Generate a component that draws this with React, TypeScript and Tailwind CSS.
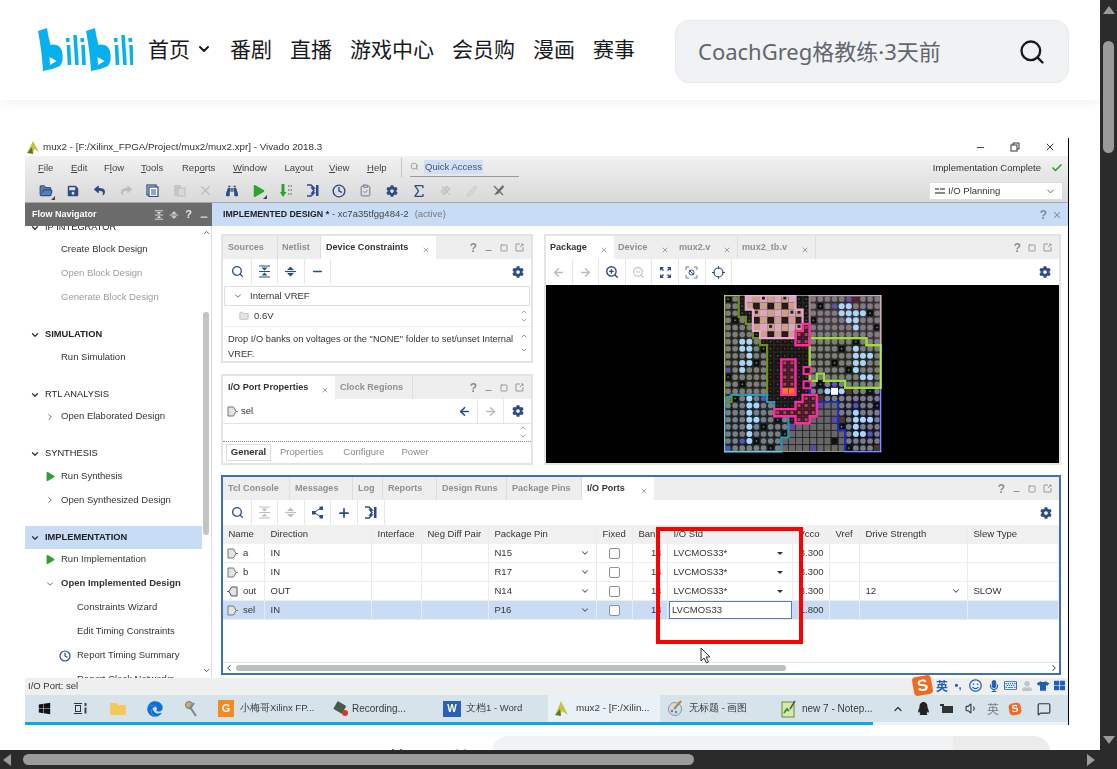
import React from "react";
import { Search, ChevronDown, ChevronRight, ChevronUp, ChevronLeft, Sigma, Minus, X, Square, Plus, Check, Folder, FolderOpen, ArrowLeft, ArrowRight, ZoomIn, ZoomOut, Clock, ClipboardCheck, MessageSquare, Volume1 } from "lucide-react";
import { FaWindows, FaEdge, FaCog, FaPlay, FaSave, FaBinoculars, FaTshirt, FaMicrophone, FaRegKeyboard, FaRegSmile, FaQq, FaUserAlt, FaThLarge, FaFolder, FaReply, FaShare } from "react-icons/fa";

const BLUE = "#2b4c86";
const DIS = "#bdbdbd";

const Logo = () => {
  const part = (
    <g>
      <path d="M0 3 L9 0 Q10 8 12.5 17 Q21 15 24 23 Q26 33 22 38 Q14 42 5 43 Q4 24 0 3Z" fill="#09b0ee" />
      <path d="M11.5 29 L12 37 L18.5 33Z" fill="#fff" />
      <g stroke="#09b0ee" strokeWidth="3.6" fill="none">
        <path d="M29.5 10 L30 14" />
        <path d="M30.5 17 L31.5 37" />
        <path d="M37 7 L39 37" />
        <path d="M44 10 L44.5 14" />
        <path d="M45 17 L46 37" />
      </g>
    </g>
  );
  return (
    <svg width="95" height="44" viewBox="0 0 95 44">
      {part}
      <g transform="translate(48 0)">{part}</g>
    </svg>
  );
};

const CollapseIcon = ({ c = BLUE, s = 13 }: { c?: string; s?: number }) => (
  <svg width={s} height={s} viewBox="0 0 13 13"><path d="M1 1h11M1 12h11M1 6.5h11" stroke={c} strokeWidth="1.2" /><path d="M3.5 2.5h6L6.5 5.5zM3.5 10.500h6L6.500 7.500z" fill={c} /></svg>
);
const ExpandIcon = ({ c = BLUE, s = 13 }: { c?: string; s?: number }) => (
  <svg width={s} height={s} viewBox="0 0 13 13"><path d="M1 6.500h11" stroke={c} strokeWidth="1.2" /><path d="M3 5L6.500 1.500 10 5zM3 8L6.500 11.500 10 8z" fill={c} /></svg>
);
const PortIn = ({ c = "#777" }: { c?: string }) => (
  <svg width="11" height="11" viewBox="0 0 11 11"><path d="M1 1h5.500l2.500 4.500L6.500 10H1z" fill="#e4e4e4" stroke={c} /><path d="M9 5.500h2" stroke={c} /></svg>
);
const PortOut = () => (
  <svg width="11" height="11" viewBox="0 0 11 11"><path d="M10 1H4.500L2 5.500 4.500 10H10z" fill="#e4e4e4" stroke="#555" /><path d="M0 5.500h2" stroke="#555" /></svg>
);
const Gear = () => <FaCog size={12} color={BLUE} />;

const Cell26 = ({ children, w = "w-[26.6px]", sep = false }: any) => (
  <div className={`${w} h-full flex items-center justify-center shrink-0 ${sep ? "border-r border-[#e6e6e6]" : ""}`}>{children}</div>
);

const Corner = () => <div className="absolute right-[-2px] bottom-[-2px] w-0 h-0 border-l-[4px] border-l-transparent border-b-[4px] border-b-[#444]" />;

const MainBar = () => {
  const items: any[] = [
    <div className="relative"><FolderOpen size={14} color={BLUE} fill="#5a7fb5" /><Corner /></div>,
    <FaSave size={12} color={BLUE} />,
    <FaReply size={11} color={BLUE} />,
    <FaShare size={11} color={DIS} />,
    <svg width="13" height="13" viewBox="0 0 13 13"><rect x="1" y="1" width="9" height="10" fill="none" stroke={BLUE} strokeWidth="1.200" /><rect x="3" y="3" width="9" height="9.500" fill="#fff" stroke={BLUE} strokeWidth="1.200" /><path d="M5 6h5M5 8h5M5 10h5" stroke={BLUE} /></svg>,
    <svg width="13" height="13" viewBox="0 0 13 13"><rect x="1" y="1" width="7" height="11" fill="#c6c6c6" /><rect x="5" y="4" width="7" height="8" fill="#d8d8d8" stroke="#bdbdbd" /></svg>,
    <X size={15} color={DIS} strokeWidth={2} />,
    <FaBinoculars size={12} color={BLUE} />,
    <div className="relative"><FaPlay size={12} color="#2fa12f" /><Corner /></div>,
    <svg width="12" height="14" viewBox="0 0 12 14"><path d="M1.500 0h3v8h2l-3.500 5L0 8h1.500z" fill="#2fa12f" /><path d="M8 1h1.500v2H8zM10.500 1H12v2h-1.500zM8 5h1.500v2H8zM10.500 5H12v2h-1.500zM8 9h1.500v2H8zM10.500 9H12v2h-1.500z" fill="#9a9a9a" /></svg>,
    <svg width="13" height="13" viewBox="0 0 13 13"><path d="M1 1h4l3 3h-2l2 2.500L6 9h2l-3 3H1" fill="none" stroke={BLUE} strokeWidth="1.600" /><path d="M10 1h2.500v11H10z" fill={BLUE} /></svg>,
    <Clock size={14} color={BLUE} strokeWidth={2.4} />,
    <ClipboardCheck size={13} color="#5a6a80" strokeWidth={1.6} />,
    <Gear />,
    <Sigma size={16} color={BLUE} strokeWidth={2} />,
    <svg width="13" height="13" viewBox="0 0 13 13"><path d="M3 2l8 9M2 7l6-5 3 3-6 6z" fill="#cfcfcf" stroke={DIS} /></svg>,
    <svg width="13" height="13" viewBox="0 0 13 13"><path d="M2 11L10 2l2 2-8 8z" fill="none" stroke="#cfcfcf" strokeWidth="1.500" /></svg>,
    <svg width="13" height="13" viewBox="0 0 13 13"><path d="M2 2l9 9" stroke="#777" strokeWidth="1.500" /><path d="M11 1L6 6 2 11l4-1 6-7z" fill="#6a6a6a" /></svg>,
  ];
  return (
    <div className="h-[23px] flex items-center pl-[8px] text-[0px]">
      {items.map((it, i) => (
        <Cell26 key={i}>{it}</Cell26>
      ))}
    </div>
  );
};

const menu: [string, string, string, string][] = [
  ["", "F", "ile", "w-[33px]"],
  ["", "E", "dit", "w-[33px]"],
  ["F", "l", "ow", "w-[37px]"],
  ["", "T", "ools", "w-[41px]"],
  ["Rep", "o", "rts", "w-[51px]"],
  ["", "W", "indow", "w-[51.500px]"],
  ["La", "y", "out", "w-[44.500px]"],
  ["", "V", "iew", "w-[38px]"],
  ["", "H", "elp", "w-[32px]"],
];

type Row = { t: string; k: "sec" | "item" | "sub"; color?: string; chev?: "r" | "d"; play?: boolean; bold?: boolean; hi?: boolean; clock?: boolean; boldSec?: boolean };
const rows: Row[] = [
  { t: "IP INTEGRATOR", k: "sec" },
  { t: "Create Block Design", k: "item" },
  { t: "Open Block Design", k: "item", color: "#9c9c9c" },
  { t: "Generate Block Design", k: "item", color: "#9c9c9c" },
  { t: "SIMULATION", k: "sec", boldSec: true },
  { t: "Run Simulation", k: "item" },
  { t: "RTL ANALYSIS", k: "sec" },
  { t: "Open Elaborated Design", k: "item", chev: "r" },
  { t: "SYNTHESIS", k: "sec" },
  { t: "Run Synthesis", k: "item", play: true },
  { t: "Open Synthesized Design", k: "item", chev: "r" },
  { t: "IMPLEMENTATION", k: "sec", hi: true, boldSec: true },
  { t: "Run Implementation", k: "item", play: true },
  { t: "Open Implemented Design", k: "item", chev: "d", bold: true },
  { t: "Constraints Wizard", k: "sub" },
  { t: "Edit Timing Constraints", k: "sub" },
  { t: "Report Timing Summary", k: "sub", clock: true },
  { t: "Report Clock Networks", k: "sub" },
];

const Sidebar = () => (
  <div className="w-[187px] shrink-0 flex flex-col">
    <div className="h-[23px] bg-[#6b6b6b] flex items-center pl-[7px] pr-[1px] text-white text-[9px] font-bold">
      <span className="flex-1">Flow Navigator</span>
      <div className="flex items-center text-[#e6e6e6]">
        <div className="w-[15px] flex justify-center"><CollapseIcon c="#ddd" s={10} /></div>
        <div className="w-[15px] flex justify-center"><ExpandIcon c="#ddd" s={10} /></div>
        <div className="w-[15px] flex justify-center text-[11px] leading-none">?</div>
        <div className="w-[15px] flex justify-center"><Minus size={10} color="#ddd" strokeWidth={3} className="mt-[5px]" /></div>
      </div>
    </div>
    <div className="flex-1 flex overflow-hidden bg-white">
      <div className="w-[177px] shrink-0 overflow-hidden">
        <div className="mt-[-8.500px]">
          {rows.map((r, i) => {
            if (r.k === "sec")
              return (
                <div key={i} className={`flex items-center pl-[5px] text-[9.300px] text-[#222] ${r.hi ? "h-[23px] mt-[14px] mb-[-1.500px] bg-[#c9dcf6]" : `h-[20px] ${i ? "mt-[15.500px]" : ""}`} ${r.boldSec ? "font-bold" : ""}`}>
                  <ChevronDown size={10} color="#333" strokeWidth={3} />
                  <span className="ml-[5px]">{r.t}</span>
                </div>
              );
            return (
              <div key={i} className={`h-[24px] flex items-center text-[9.500px] ${r.k === "sub" ? "pl-[34px]" : "pl-[20px]"} ${r.bold ? "font-bold" : ""}`} style={{ color: r.color || "#333" }}>
                <div className={`${r.k === "sub" ? "w-[18px]" : "w-[16px]"} shrink-0 flex items-center`}>
                  {r.play && <FaPlay size={9} color="#2fa12f" className="ml-[1px]" />}
                  {r.chev === "r" && <ChevronRight size={10} color="#555" />}
                  {r.chev === "d" && <ChevronDown size={10} color="#555" />}
                  {r.clock && <Clock size={12} color={BLUE} strokeWidth={2.400} />}
                </div>
                <span className="whitespace-nowrap">{r.t}</span>
              </div>
            );
          })}
        </div>
      </div>
      <div className="w-[10px] flex flex-col items-center shrink-0 border-r border-[#dcdcdc] pr-[1px]">
        <ChevronUp size={9} color="#555" strokeWidth={2.500} className="mt-[2px]" />
        <div className="w-[6px] h-[223px] mt-[75px] rounded-[3px] bg-[#c4c4c4]" />
        <div className="flex-1" />
        <ChevronDown size={9} color="#555" strokeWidth={2.500} className="mb-[3px]" />
      </div>
    </div>
  </div>
);

const WinCtl = ({ min = true, gap = "gap-[7px]" }: any) => (
  <div className={`flex items-center ${gap} text-[#8a8a8a] ml-auto pr-[7px]`}>
    <span className="text-[12px] font-bold leading-none">?</span>
    {min && <Minus size={9} color="#8a8a8a" strokeWidth={2.500} className="mt-[5px]" />}
    <Square size={8} color="#777" strokeWidth={2} />
    <svg width="9" height="9" viewBox="0 0 9 9"><path d="M5 1H1v7h7V4M5 4l3-3M6 1h2v2" fill="none" stroke="#999" /></svg>
  </div>
);

const Tab = ({ t, w, active, close, pad = "pl-[4px]", sep = true }: any) => (
  <div className={`relative h-full flex items-center shrink-0 text-[9.100px] font-bold ${pad} ${active ? "bg-white text-[#333]" : "text-[#8f8f8f]"} ${sep && !active ? "border-r border-[#dddddd]" : ""}`} style={{ width: w }}>
    <span className="whitespace-nowrap">{t}</span>
    {close && <X size={8} color="#777" className="absolute right-[6px] top-[10px]" />}
  </div>
);

const Box = ({ className = "", children }: any) => <div className={`border-2 border-[#e4e4e4] bg-white flex flex-col overflow-hidden ${className}`}>{children}</div>;

const DevicePanel = () => (
  <Box className="h-[129px]">
    <div className="h-[23px] bg-[#eeeeee] flex items-center shrink-0">
      <Tab t="Sources" w={55} pad="pl-[5px]" />
      <Tab t="Netlist" w={43} />
      <Tab t="Device Constraints" w={115} active close pad="pl-[5px]" />
      <WinCtl />
    </div>
    <div className="h-[27px] shrink-0 flex items-center pl-[2px] pb-[2px]">
      <Cell26 sep><Search size={13} color={BLUE} strokeWidth={2.400} /></Cell26>
      <Cell26 sep><CollapseIcon /></Cell26>
      <Cell26 sep><ExpandIcon /></Cell26>
      <Cell26 sep><Minus size={13} color={BLUE} strokeWidth={3} /></Cell26>
      <div className="ml-auto pr-[7px]"><Gear /></div>
    </div>
    <div className="h-[20px] shrink-0 mx-[1px] border border-[#dedede] flex items-center pl-[8px] text-[9.500px] text-[#333]">
      <ChevronDown size={10} color="#555" />
      <span className="ml-[7px]">Internal VREF</span>
    </div>
    <div className="h-[21px] shrink-0 flex items-center pl-[16px] pr-[3px] text-[9.500px] text-[#333] border-b border-[#eeeeee]">
      <Folder size={10} color="#b9b9b9" fill="#e4e4e4" />
      <span className="ml-[5px]">0.6V</span>
      <div className="ml-auto flex flex-col"><ChevronUp size={8} color="#777" /><ChevronDown size={8} color="#777" /></div>
    </div>
    <div className="flex-1 flex pl-[5px] pr-[3px] pt-[5px] text-[9.300px] leading-[14.500px] text-[#333]">
      <p className="w-[292px]">Drop I/O banks on voltages or the "NONE" folder to set/unset Internal VREF.</p>
      <div className="ml-auto flex flex-col gap-[6px]"><ChevronUp size={8} color="#555" /><ChevronDown size={8} color="#555" /></div>
    </div>
  </Box>
);

const PropsPanel = () => (
  <Box className="flex-1">
    <div className="h-[23px] bg-[#eeeeee] flex items-center shrink-0">
      <Tab t="I/O Port Properties" w={112} active close pad="pl-[5px]" />
      <Tab t="Clock Regions" w={78} pad="pl-[5px]" />
      <WinCtl />
    </div>
    <div className="h-[25px] shrink-0 flex items-center pl-[4px] border-b border-[#e4e4e4] text-[9.500px] text-[#333]">
      <PortIn />
      <span className="ml-[3px]">sel</span>
      <div className="ml-auto flex items-center h-full">
        <Cell26 sep><ArrowLeft size={13} color={BLUE} strokeWidth={3} /></Cell26>
        <Cell26 sep><ArrowRight size={13} color={DIS} strokeWidth={3} /></Cell26>
        <Cell26><Gear /></Cell26>
      </div>
    </div>
    <div className="flex-1 flex justify-end pr-[4px] border-b border-dotted border-[#888]">
      <div className="flex flex-col"><ChevronUp size={8} color="#777" /><ChevronDown size={8} color="#777" /></div>
    </div>
    <div className="h-[21px] shrink-0 flex items-center text-[9.500px] text-[#8a8a8a] pl-[3px]">
      <div className="h-[17px] w-[45px] border border-[#dddddd] flex items-center justify-center font-bold text-[#333]">General</div>
      <span className="ml-[9px]">Properties</span>
      <span className="ml-[20px]">Configure</span>
      <span className="ml-[17px]">Power</span>
    </div>
  </Box>
);

const poly = {
  olive: "0,0 2,0 2,3 3,3 3,4 4,4 4,6 5,6 5,7 6,7 6,14 1,14 1,15 0,15",
  pale: "3,0 10,0 10,2 11,2 11,5 10,5 10,6 5,6 5,5 4,5 4,2 3,2",
  mauve: "12,0 22,0 22,7 20,7 20,6 12,6",
  lime: "12,6 20,6 20,7 22,7 22,13 17,13 17,12 14,12 14,11 13,11 13,12 12,12",
  blue: "12,12 13,12 13,11 14,11 14,12 17,12 17,13 22,13 22,22 17,22 17,19 16,19 16,15 13,15 13,14 12,14",
  teal: "0,15 1,14 6,14 6,15 7,15 7,17 9,17 9,20 8,20 8,22 0,22",
  gray: "8,22 8,20 9,20 9,18 12,18 12,17 13,17 13,15 16,15 16,19 17,19 17,22",
  hot1: "10,5 11,5 11,4 12,4 12,7 10,7",
  hot2: "8,9 10,9 10,14 8,14",
  hot3: "11,14 13,14 13,17 12,17 12,18 10,18 10,17 7,17 7,16 10,16 10,15 11,15",
};
const parse = (s: string) => s.split(" ").map((p) => p.split(",").map(Number));
const inside = (pts: number[][], x: number, y: number) => {
  let c = false;
  for (let i = 0, j = pts.length - 1; i < pts.length; j = i++) {
    const [xi, yi] = pts[i];
    const [xj, yj] = pts[j];
    if (yi > y !== yj > y && x < ((xj - xi) * (y - yi)) / (yj - yi) + xi) c = !c;
  }
  return c;
};
const region = (c: number, r: number) => {
  for (const k of ["hot1", "hot2", "hot3", "olive", "pale", "mauve", "lime", "blue", "teal", "gray"] as const) {
    if (inside(parse(poly[k]), c + 0.5, r + 0.5)) return k;
  }
  return "core";
};
const lightBlue = new Set(["16,1","17,1","16,2","17,2","18,2","19,2","17,3","18,3","18,4","2,6","3,6","2,7","3,7","3,8","2,9","3,9","2,10","3,14","3,15","4,15","3,16","3,17","4,17","3,18","3,19","3,20","18,7","18,8","19,8","20,8","18,9","19,9","18,10","19,11","20,11","18,16","18,17","19,17","20,17","18,18","18,19","19,19","14,13","16,13"]);
const tint: any = { olive: "#2c2f24", mauve: "#4a3a44", lime: "#33372a", blue: "#1c1c38", teal: "#1e2c38" };

const Pkg = () => {
  const S = 7.100;
  const cells: any[] = [];
  for (let r = 0; r < 22; r++)
    for (let c = 0; c < 22; c++) {
      const reg = region(c, r);
      const x = c * S;
      const y = r * S;
      const key = `${c},${r}`;
      const h = (c * 7 + r * 13 + c * r * 3) % 11;
      const cx = x + S / 2;
      const cy = y + S / 2;
      if (reg === "core") {
        cells.push(<rect key={key} x={x + 0.4} y={y + 0.4} width={S - 0.8} height={S - 0.8} fill="#161212" stroke="#444" strokeWidth="0.4" />);
        cells.push(<path key={key + "p"} d={`M${cx - 1.200} ${cy}h2.400M${cx} ${cy - 1.200}v2.400`} stroke={h % 2 ? "#7a2a2a" : "#3a6a3a"} strokeWidth="0.7" />);
      } else if (reg === "pale") {
        cells.push(<rect key={key} x={x} y={y} width={S} height={S} fill={(c + r) % 2 ? "#d9a8c2" : "#caa08a"} />);
        if (c % 2 === 0 && r % 2 === 1) cells.push(<rect key={key + "k"} x={x + 0.800} y={y + 0.800} width={S - 1.600} height={S - 1.600} fill="#2a1a22" stroke="#1a0a12" />);
        else if (h < 3) cells.push(<rect key={key + "k"} x={x + 2} y={y + 1} width={3} height={3} fill="#222" />);
      } else if (reg === "hot1" || reg === "hot2" || reg === "hot3") {
        const orange = reg === "hot2" && r === 13;
        cells.push(<rect key={key} x={x} y={y} width={S} height={S} fill={orange ? "#ff7a1a" : "#3a1a2a"} stroke="#7a2050" strokeWidth="0.5" />);
        if (!orange) cells.push(<rect key={key + "k"} x={x + 2} y={y + 2} width={3} height={3} fill="#a05030" />);
      } else if (reg === "gray") {
        cells.push(<rect key={key} x={x + 0.300} y={y + 0.300} width={S - 0.600} height={S - 0.600} fill={h === 2 ? "#5f48a8" : h === 0 ? "#111" : "#676767"} stroke="#333" strokeWidth="0.4" />);
      } else {
        cells.push(<rect key={key} x={x} y={y} width={S} height={S} fill={tint[reg]} />);
        if (key === "15,13") cells.push(<rect key={key + "w"} x={x} y={y} width={S} height={S} fill="#fff" />);
        else if (lightBlue.has(key)) cells.push(<circle key={key + "c"} cx={cx} cy={cy} r={3} fill="#a9d6fb" />);
        else if (h === 0) {
          cells.push(<rect key={key + "k"} x={x + 0.500} y={y + 0.500} width={S - 1} height={S - 1} fill="#0d0d0d" />);
          cells.push(<path key={key + "p"} d={`M${cx - 1.200} ${cy}h2.400M${cx} ${cy - 1.200}v2.400`} stroke="#5a8a5a" strokeWidth="0.7" />);
        } else if (h === 5 && (c + r) % 3 === 0) {
          cells.push(<rect key={key + "k"} x={x + 0.500} y={y + 0.500} width={S - 1} height={S - 1} fill={reg === "mauve" ? "#5a1e34" : "#4f3a22"} />);
        } else if (h === 9 && (c * r) % 5 === 0) {
          cells.push(<circle key={key + "c"} cx={cx} cy={cy} r={2.600} fill="#5a56b0" />);
        } else cells.push(<circle key={key + "c"} cx={cx} cy={cy} r={2.800} fill="#7d7d7d" />);
      }
    }
  const outline = (p: string, col: string, w = 2.200) => (
    <polygon key={p} points={parse(p).map(([a, b]) => `${a * S},${b * S}`).join(" ")} fill="none" stroke={col} strokeWidth={w} />
  );
  return (
    <svg width="158" height="158" viewBox="-0.500 -0.500 158 158" className="block">
      {cells}
      {outline(poly.mauve, "#a87d96")}
      {outline(poly.olive, "#6e8f1e")}
      {outline(poly.pale, "#e5a9cc")}
      {outline(poly.teal, "#2a98b4")}
      {outline(poly.blue, "#1b2dbd")}
      {outline(poly.lime, "#99e12e", 2.400)}
      {outline(poly.hot1, "#ff2aa8", 2.400)}
      {outline(poly.hot2, "#ff2aa8", 2.400)}
      {outline(poly.hot3, "#ff2aa8", 2.400)}
      {[[11, 10], [11, 12]].map(([a, b]) => (
        <rect key={a + "-" + b} x={a * S + 1} y={b * S + 0.500} width={S} height={S} fill="#2a1220" stroke="#ff2aa8" strokeWidth="2" />
      ))}
      <rect x="0" y="0" width={22 * S} height={22 * S} fill="none" stroke="#d8d8d8" strokeWidth="0.600" />
    </svg>
  );
};

const PackagePanel = () => (
  <Box className="flex-1 h-full">
    <div className="h-[23px] bg-[#eeeeee] flex items-center shrink-0">
      <Tab t="Package" w={68} active close />
      <Tab t="Device" w={61} close sep={false} />
      <Tab t="mux2.v" w={63} close />
      <Tab t="mux2_tb.v" w={78} close />
      <WinCtl min={false} />
    </div>
    <div className="h-[26px] shrink-0 flex items-center">
      <Cell26 sep><ArrowLeft size={13} color={DIS} strokeWidth={3} /></Cell26>
      <Cell26 sep><ArrowRight size={13} color={DIS} strokeWidth={3} /></Cell26>
      <Cell26 sep><ZoomIn size={14} color={BLUE} strokeWidth={2.400} /></Cell26>
      <Cell26 sep><ZoomOut size={13} color={DIS} /></Cell26>
      <Cell26 sep><svg width="13" height="13" viewBox="0 0 13 13"><path d="M1 1l4 0-1.500 1.500L5 4 4 5 2.500 3.500 1 5zM12 1v4l-1.500-1.500L9 5 8 4l1.500-1.500L8 1zM1 12V8l1.500 1.500L4 8l1 1-1.500 1.500L5 12zM12 12H8l1.500-1.500L8 9l1-1 1.500 1.500L12 8z" fill={BLUE} /></svg></Cell26>
      <Cell26 sep><svg width="13" height="13" viewBox="0 0 13 13"><path d="M1 4V1h3M9 1h3v3M1 9v3h3M12 9v3H9" fill="none" stroke="#777" /><circle cx="6.500" cy="6.500" r="2.500" fill="none" stroke={BLUE} /><path d="M4 4l5 5" stroke={BLUE} /></svg></Cell26>
      <Cell26 sep><svg width="13" height="13" viewBox="0 0 13 13"><circle cx="6.500" cy="6.500" r="4.500" fill="none" stroke={BLUE} strokeWidth="1.200" /><path d="M6.500 0v3M6.500 10v3M0 6.500h3M10 6.500h3" stroke={BLUE} /></svg></Cell26>
      <div className="ml-auto pr-[8px]"><Gear /></div>
    </div>
    <div className="flex-1 bg-black flex items-center justify-center"><Pkg /></div>
  </Box>
);

const colsCls = "grid grid-cols-[42px_107px_50px_67px_108px_36px_35px_125px_37px_30px_108px_1fr]";
const headers = ["Name", "Direction", "Interface", "Neg Diff Pair", "Package Pin", "Fixed", "Bank", "I/O Std", "Vcco", "Vref", "Drive Strength", "Slew Type"];
const data = [
  { n: "a", d: "IN", p: "N15", v: "3.300", std: "LVCMOS33*" },
  { n: "b", d: "IN", p: "R17", v: "3.300", std: "LVCMOS33*" },
  { n: "out", d: "OUT", p: "N14", v: "3.300", std: "LVCMOS33*", ds: "12", sl: "SLOW" },
  { n: "sel", d: "IN", p: "P16", v: "1.800", std: "LVCMOS33", sel: true },
];
const Td = ({ className = "", children }: any) => <div className={`h-full flex items-center px-[5.500px] border-r border-[#ececec] ${className}`}>{children}</div>;

const PortsPanel = () => (
  <div className="h-[200px] border-2 border-[#3f6fb5] bg-white flex flex-col overflow-hidden">
    <div className="h-[23px] bg-[#eeeeee] flex items-center shrink-0">
      <Tab t="Tcl Console" w={67} pad="pl-[5px]" />
      <Tab t="Messages" w={63} pad="pl-[5px]" />
      <Tab t="Log" w={30} pad="pl-[5px]" />
      <Tab t="Reports" w={54} pad="pl-[5px]" />
      <Tab t="Design Runs" w={70} pad="pl-[5px]" />
      <Tab t="Package Pins" w={75} pad="pl-[5px]" />
      <Tab t="I/O Ports" w={72} active close pad="pl-[5px]" />
      <WinCtl />
    </div>
    <div className="h-[25px] shrink-0 flex items-center pl-[2px]">
      <Cell26 sep><Search size={13} color={BLUE} strokeWidth={2.400} /></Cell26>
      <Cell26 sep><CollapseIcon c={DIS} /></Cell26>
      <Cell26 sep><ExpandIcon c={DIS} /></Cell26>
      <Cell26 sep><svg width="13" height="13" viewBox="0 0 13 13"><path d="M3 6.500L10 2M3 6.500L10 11" stroke={BLUE} /><rect x="1" y="5" width="3.500" height="3.500" fill={BLUE} /><rect x="8.500" y="0.500" width="3.500" height="3.500" fill={BLUE} /><rect x="8.500" y="9" width="3.500" height="3.500" fill={BLUE} /></svg></Cell26>
      <Cell26 sep><Plus size={14} color={BLUE} strokeWidth={3} /></Cell26>
      <Cell26 sep><svg width="13" height="13" viewBox="0 0 13 13"><path d="M1 1h4l3 3H6l2 2.500L6 9h2l-3 3H1" fill="none" stroke={BLUE} strokeWidth="1.600" /><path d="M10 1h2.500v11H10z" fill={BLUE} /></svg></Cell26>
      <div className="ml-auto pr-[7px]"><Gear /></div>
    </div>
    <div className={`${colsCls} h-[19px] shrink-0 bg-[#f0f0f0] text-[9.500px] text-[#333]`}>
      {headers.map((h) => (
        <Td key={h} className="whitespace-nowrap overflow-hidden">{h}</Td>
      ))}
    </div>
    {data.map((r) => (
      <div key={r.n} className={`${colsCls} h-[19px] shrink-0 text-[9.500px] text-[#333] border-b border-[#ededed] ${r.sel ? "bg-[#c9dcf6]" : "bg-white"}`}>
        <Td className="pl-[4px] gap-[5px]">{r.n === "out" ? <PortOut /> : <PortIn />}<span>{r.n}</span></Td>
        <Td>{r.d}</Td>
        <Td />
        <Td />
        <Td className="justify-between pr-[6px]"><span>{r.p}</span><ChevronDown size={10} color="#555" strokeWidth={2.500} /></Td>
        <Td className="justify-center"><span className="w-[11px] h-[11px] rounded-[2px] border border-[#8f8f8f] bg-white" /></Td>
        <Td className="justify-end">14</Td>
        {r.sel ? (
          <div className="h-full flex items-center pl-[1px] pr-[1px]">
            <div className="w-full h-[18px] bg-white border border-[#5b7db5] pl-[2px] flex items-center">{r.std}</div>
          </div>
        ) : (
          <Td className="justify-between pr-[9px]"><span>{r.std}</span><span className="w-0 h-0 border-x-[3px] border-x-transparent border-t-[3px] border-t-[#333]" /></Td>
        )}
        <Td className="justify-end">{r.v}</Td>
        <Td />
        <Td className="justify-between pr-[6px]"><span>{r.ds}</span>{r.ds && <ChevronDown size={10} color="#555" strokeWidth={2.500} />}</Td>
        <Td>{r.sl}</Td>
      </div>
    ))}
    <div className="flex-1" />
    <div className="h-[11px] shrink-0 border-t border-[#e4e4e4] flex items-center pl-[1px]">
      <ChevronLeft size={10} color="#555" strokeWidth={2.500} />
      <div className="w-[550px] h-[6px] rounded-[3px] bg-[#bdbdbd] ml-[2px]" />
      <ChevronRight size={10} color="#555" strokeWidth={2.500} className="ml-auto" />
    </div>
  </div>
);

const Sogou = ({ s = 16 }: { s?: number }) => (
  <div className="flex items-center justify-center rounded-[4px] bg-[#f26a22] text-white font-bold rotate-[-10deg] leading-none" style={{ width: s, height: s, fontSize: s * 0.85 }}>S</div>
);

const TrayBox = ({ w, children }: any) => <div className="flex justify-center items-center shrink-0" style={{ width: w }}>{children}</div>;

const Taskbar = () => (
  <div className="relative h-[30px] bg-[#d6e3eb] flex text-[#3a3a3a] text-[9.500px] border-b-[3px] border-[#0ea5e9]">
    <div className="absolute right-0 bottom-[-3px] w-[195px] h-[3px] bg-[#e8f3f9]" />
    <div className="w-[193px] h-full flex items-center shrink-0">
      <div className="w-[37px] flex justify-center pl-[2px]"><FaWindows size={13} color="#111" /></div>
      <div className="w-[37px] flex justify-center">
        <svg width="13" height="13" viewBox="0 0 13 13"><path d="M0 1.500h8M0 11.500h8" stroke="#333" strokeWidth="1.200" /><rect x="1.500" y="3.500" width="5" height="6" fill="none" stroke="#333" /><path d="M10.500 1h2v3h-2zM10.500 5.500h2v6h-2z" fill="#444" /></svg>
      </div>
      <div className="w-[37px] flex justify-center"><FaFolder size={16} color="#f4c95a" /></div>
      <div className="w-[37px] flex justify-center"><FaEdge size={16} color="#0f6fd6" /></div>
      <div className="w-[37px] flex justify-center">
        <svg width="17" height="17" viewBox="0 0 17 17"><circle cx="6" cy="5" r="3.500" fill="#c4b277" stroke="#777" /><path d="M7 7l6 9M11 3l-5 6" stroke="#888" strokeWidth="2.200" /></svg>
      </div>
    </div>
    <div className="w-[115px] flex items-center gap-[6px] shrink-0"><div className="w-[16px] h-[17px] bg-[#f58a1f] text-white text-[11px] font-bold flex items-center justify-center">G</div><span className="whitespace-nowrap">小梅哥Xilinx FP...</span></div>
    <div className="w-[110px] flex items-center gap-[2px] shrink-0"><svg width="17" height="17" viewBox="0 0 17 17"><rect x="2" y="3" width="10" height="9" rx="1" fill="#4a5a4a" transform="rotate(30 7 7)" /><circle cx="12" cy="13" r="3" fill="#d03a2a" /></svg><span className="text-[10px]">Recording...</span></div>
    <div className="w-[105px] flex items-center gap-[5px] shrink-0"><div className="w-[18px] h-[16px] bg-[#2b5fb8] text-white text-[10px] font-bold flex items-center justify-center">W</div><span className="whitespace-nowrap">文档1 - Word</span></div>
    <div className="w-[112px] flex items-center gap-[6px] pl-[6px] bg-[#eaf1f6] shrink-0"><svg width="16" height="17" viewBox="0 0 16 17"><path d="M7 1l7 14-6-4-2 5-4-3z" fill="#c9c23f" /><path d="M1 15l5-6 1 7z" fill="#5a7a2a" /></svg><span className="whitespace-nowrap text-[9.800px]">mux2 - [F:/Xilin...</span></div>
    <div className="w-[113px] flex items-center gap-[5px] pl-[7px] shrink-0"><svg width="17" height="17" viewBox="0 0 17 17"><circle cx="8" cy="9" r="6.500" fill="#cfe0ea" stroke="#7a9ab0" /><path d="M14 1L7 9" stroke="#b8863a" strokeWidth="2" /><circle cx="5" cy="11" r="1.200" fill="#e04a3a" /><circle cx="9" cy="12" r="1.200" fill="#3a8ae0" /></svg><span className="whitespace-nowrap">无标题 - 画图</span></div>
    <div className="w-[113px] flex items-center gap-[5px] pl-[7px] shrink-0"><svg width="17" height="18" viewBox="0 0 17 18"><rect x="2" y="2" width="12" height="15" fill="#d8e8a8" stroke="#6a8a3a" /><path d="M4 13l3-4 2 2" stroke="#2f9a2f" strokeWidth="2" fill="none" /><path d="M15 1l-5 8" stroke="#555" strokeWidth="1.500" /></svg><span className="whitespace-nowrap text-[10px]">new 7 - Notep...</span></div>
    <div className="flex-1 flex items-center">
      <TrayBox w={24}><ChevronUp size={12} color="#333" strokeWidth={2.500} /></TrayBox>
      <TrayBox w={26}><FaQq size={13} color="#222" /></TrayBox>
      <TrayBox w={22}><svg width="14" height="10" viewBox="0 0 14 10"><rect x="2" y="2" width="11" height="7" fill="#333" /><rect y="0" width="4" height="2" fill="#333" /></svg></TrayBox>
      <TrayBox w={26}><Volume1 size={13} color="#333" /></TrayBox>
      <TrayBox w={18}><span className="text-[12px] text-[#777]" style={{ fontFamily: '"Noto Sans CJK SC"' }}>英</span></TrayBox>
      <TrayBox w={26}><Sogou s={12} /></TrayBox>
      <TrayBox w={32}><MessageSquare size={14} color="#333" /></TrayBox>
    </div>
  </div>
);

const SogouBar = () => (
  <div className="absolute left-[887px] top-[537px] w-[155px] h-[21px] flex items-center">
    <TrayBox w={21}><Sogou s={19} /></TrayBox>
    <TrayBox w={18}><span className="text-[12px] font-bold text-[#1f5fb8]" style={{ fontFamily: '"Noto Sans CJK SC"' }}>英</span></TrayBox>
    <TrayBox w={14}><span className="text-[11px] font-bold text-[#1f5fb8]">•,</span></TrayBox>
    <TrayBox w={20}><FaRegSmile size={13} color="#1f5fb8" /></TrayBox>
    <TrayBox w={17}><FaMicrophone size={12} color="#1f5fb8" /></TrayBox>
    <TrayBox w={16}><FaRegKeyboard size={13} color="#1f5fb8" /></TrayBox>
    <TrayBox w={17}><FaUserAlt size={10} color="#bcc4cc" /></TrayBox>
    <TrayBox w={16}><FaTshirt size={12} color="#1f5fb8" /></TrayBox>
    <TrayBox w={16}><FaThLarge size={11} color="#1f5fb8" /></TrayBox>
  </div>
);

const Vivado = () => (
  <div className="relative w-[1044px] h-[587px] bg-white border-r border-black flex flex-col blur-[0.35px] text-[#333]" style={{ fontFamily: '"Liberation Sans", sans-serif' }}>
    <div className="h-[18px] flex items-center pl-[2px] pr-[12px] text-[9.800px] text-[#333] shrink-0">
      <svg width="13" height="13" viewBox="0 0 13 13"><path d="M6 0l6 11-5-3-1 5-5-3z" fill="#c9c23f" /><path d="M0 12l5-6 1 7z" fill="#5a7a2a" /></svg>
      <span className="ml-[3px] whitespace-nowrap">mux2 - [F:/Xilinx_FPGA/Project/mux2/mux2.xpr] - Vivado 2018.3</span>
      <div className="ml-auto flex items-center gap-[24px]">
        <Minus size={11} color="#333" />
        <svg width="10" height="10" viewBox="0 0 10 10"><rect x="1" y="3" width="6" height="6" fill="none" stroke="#333" /><path d="M3 3V1h6v6H7" fill="none" stroke="#333" /></svg>
        <X size={12} color="#333" />
      </div>
    </div>
    <div className="h-[47px] shrink-0 bg-gradient-to-b from-[#f1f1f1] to-[#d9d9d9] border-b border-[#a8a8a8] flex">
      <div className="flex flex-col flex-1">
        <div className="h-[24px] flex items-center pl-[13px] text-[9.500px] text-[#444]">
          {menu.map(([a, u, b, w]) => (
            <span key={a + u + b} className={w}>{a}<u>{u}</u>{b}</span>
          ))}
          <div className="h-[19px] border-l border-[#c4c4c4] ml-[2px] pl-[8px] flex items-center">
            <div className="w-[109px] h-[20px] border-b border-[#9a9a9a] flex items-center mt-[-1px]">
              <Search size={9} color="#8a8a8a" />
              <span className="ml-[5px] bg-[#cfe0f8] px-[1px] text-[#44556a]">Quick Access</span>
            </div>
          </div>
        </div>
        <MainBar />
      </div>
      <div className="flex flex-col items-end w-[140px] pr-[5px]">
        <div className="h-[24px] flex items-center gap-[10px] text-[9.500px] whitespace-nowrap">
          <span>Implementation Complete</span>
          <Check size={12} color="#2fa12f" strokeWidth={3.500} />
        </div>
        <div className="h-[18px] mt-[2px] w-[134px] bg-white border border-[#dddddd] flex items-center pl-[5px] pr-[6px] text-[9.500px] text-[#333]">
          <svg width="10" height="8" viewBox="0 0 10 8"><path d="M0 1h4v2H0zM5 1h5v2H5zM0 5h10v2H0z" fill="#888" /></svg>
          <span className="ml-[3px]">I/O Planning</span>
          <ChevronDown size={11} color="#555" className="ml-auto" />
        </div>
      </div>
    </div>
    <div className="flex-1 flex min-h-0 overflow-hidden">
      <Sidebar />
      <div className="flex-1 flex flex-col min-w-0">
        <div className="h-[23px] shrink-0 bg-[#c9dcf6] flex items-center pl-[11px] pr-[6px] text-[9.500px]">
          <span className="font-bold text-[#222] text-[8.800px] whitespace-nowrap">IMPLEMENTED DESIGN *</span>
          <span className="ml-[3px] text-[#444]">- xc7a35tfgg484-2</span>
          <span className="ml-[6px] text-[#777]">(active)</span>
          <div className="ml-auto flex items-center gap-[5px] text-[#7a8a9a]"><span className="text-[12px] font-bold leading-none">?</span><X size={10} color="#7a8a9a" strokeWidth={2.500} /></div>
        </div>
        <div className="flex-1 pl-[9px] pr-[7px] pt-[8px] flex flex-col gap-[10px]">
          <div className="flex gap-[11px] h-[231px]">
            <div className="w-[312px] flex flex-col gap-[11px] shrink-0">
              <DevicePanel />
              <PropsPanel />
            </div>
            <PackagePanel />
          </div>
          <PortsPanel />
        </div>
      </div>
    </div>
    <div className="h-[17px] shrink-0 bg-[#eef0f0] flex items-center pl-[3px] text-[9.500px] text-[#333]">I/O Port: sel</div>
    <Taskbar />
    <SogouBar />
    <div className="absolute left-[631px] top-[389px] w-[147px] h-[117px] border-[4px] border-[#ff0000]" />
    <svg width="13" height="18" viewBox="0 0 13 18" className="absolute left-[675px] top-[509px]"><path d="M1 1v13l3-3 2.500 5 2-1L6 10h4z" fill="#fff" stroke="#333" /></svg>
  </div>
);

const nav = ["番剧", "直播", "游戏中心", "会员购", "漫画", "赛事"];

export default function App() {
  return (
    <div className="w-[1117px] h-[769px] flex flex-col bg-white overflow-hidden" style={{ fontFamily: '"Noto Sans", "Noto Sans CJK SC", sans-serif' }}>
      <div className="h-[750px] flex">
        <div className="w-[1100px] flex flex-col overflow-hidden">
          <header className="relative z-10 h-[100px] shrink-0 bg-white shadow-[0_2px_12px_rgba(0,0,0,0.07)] flex items-center pl-[38px] pr-[31px]">
            <div className="mt-[-1px]"><Logo /></div>
            <nav className="ml-[15px] mt-[-3px] flex items-center gap-[18px] text-[21px] text-[#18191c] whitespace-nowrap" style={{ fontFamily: '"Noto Sans CJK SC", sans-serif' }}>
              <span className="flex items-center gap-[6px]">首页<ChevronDown size={16} color="#18191c" strokeWidth={3} /></span>
              {nav.map((n) => <span key={n}>{n}</span>)}
            </nav>
            <div className="ml-auto w-[394px] h-[63px] mt-[3px] rounded-[14px] bg-[#f1f2f4] border border-[#e6e8ea] flex items-center pl-[22px] pr-[22px]">
              <span className="text-[22px] text-[#61666d] whitespace-nowrap">CoachGreg格教练·3天前</span>
              <Search size={28} color="#18191c" strokeWidth={2} className="ml-auto" />
            </div>
          </header>
          <div className="flex-1 pt-[38px] pl-[25px] relative">
            <Vivado />
            <div className="absolute left-[389px] top-[646px] flex gap-[48px] text-[#555]">
              <X size={16} strokeWidth={3} color="#555" />
              <X size={16} strokeWidth={3} color="#aaa" />
            </div>
            <div className="absolute left-[492px] top-[636px] w-[558px] h-[20px] rounded-t-[16px] bg-[#f1f2f4] overflow-hidden">
              <div className="absolute right-0 top-0 w-[97px] h-full bg-[#ececec]" />
            </div>
          </div>
        </div>
        <div className="w-[17px] shrink-0 bg-[#2b2b2b] flex flex-col items-center">
          <div className="mt-[6px] w-0 h-0 border-x-[6px] border-x-transparent border-b-[8px] border-b-[#9b9b9b]" />
          <div className="mt-[27px] w-[11px] h-[112px] rounded-[6px] bg-[#9b9b9b]" />
          <div className="mt-auto mb-[6px] w-0 h-0 border-x-[6px] border-x-transparent border-t-[8px] border-t-[#9b9b9b]" />
        </div>
      </div>
      <div className="h-[19px] bg-[#2b2b2b] flex items-center pl-[3px] pr-[22px]">
        <div className="w-0 h-0 border-y-[6px] border-y-transparent border-r-[8px] border-r-[#9b9b9b]" />
        <div className="ml-[12px] w-[671px] h-[11px] rounded-[6px] bg-[#9b9b9b]" />
        <div className="ml-auto w-0 h-0 border-y-[6px] border-y-transparent border-l-[8px] border-l-[#9b9b9b]" />
      </div>
    </div>
  );
}
